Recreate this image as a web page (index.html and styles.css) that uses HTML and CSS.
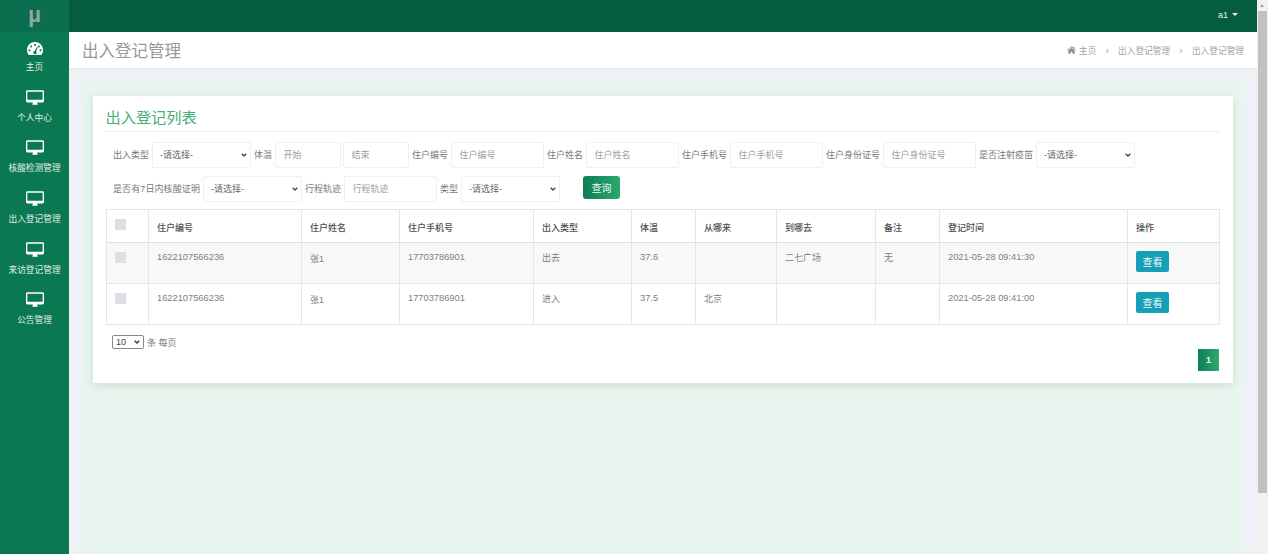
FILE: index.html
```html
<!DOCTYPE html>
<html lang="zh-CN">
<head>
<meta charset="utf-8">
<title>出入登记管理</title>
<link rel="stylesheet" href="styles.css">
</head>
<body>
<div class="app">
  <aside class="sidebar">
    <div class="logo">µ</div>
    <nav>
      <a class="nav-item"><svg class="nav-icon gauge" viewBox="0 0 20 16"><path fill="#fff" fill-rule="evenodd" d="M10 0C4.500 0 0 4.400 0 10c0 2.200.7 4.200 1.900 5.800.2.200.5.200.7.200h14.800c.3 0 .5 0 .7-.2C19.300 14.200 20 12.200 20 10 20 4.400 15.500 0 10 0zM10 2.300a1.300 1.300 0 1 1 0 2.600 1.300 1.300 0 0 1 0-2.600zM5.200 4.300a1.300 1.300 0 1 1 0 2.600 1.300 1.300 0 0 1 0-2.600zM14.800 4.300a1.300 1.300 0 1 1 0 2.600 1.300 1.300 0 0 1 0-2.600zM3 9a1.300 1.300 0 1 1 0 2.600A1.300 1.300 0 0 1 3 9zM17 9a1.300 1.300 0 1 1 0 2.600A1.300 1.300 0 0 1 17 9zM12.500 5.700l.9.4-2 5.700a2 2 0 1 1-1.800-.6z"/></svg><span>主页</span></a>
      <a class="nav-item"><svg class="nav-icon" viewBox="0 0 20 16"><use href="#monitor"/></svg><span>个人中心</span></a>
      <a class="nav-item"><svg class="nav-icon" viewBox="0 0 20 16"><use href="#monitor"/></svg><span>核酸检测管理</span></a>
      <a class="nav-item"><svg class="nav-icon" viewBox="0 0 20 16"><use href="#monitor"/></svg><span>出入登记管理</span></a>
      <a class="nav-item"><svg class="nav-icon" viewBox="0 0 20 16"><use href="#monitor"/></svg><span>来访登记管理</span></a>
      <a class="nav-item"><svg class="nav-icon" viewBox="0 0 20 16"><use href="#monitor"/></svg><span>公告管理</span></a>
    </nav>
  </aside>
  <div class="main">
    <header class="topbar"><span class="user">a1</span><span class="caret"></span></header>
    <div class="titlebar">
      <h1>出入登记管理</h1>
      <ol class="crumbs">
        <li><svg class="home" viewBox="0 0 12 10"><path fill="#8a8a8a" d="M6 0 0 5.200l.6.700L6 1.300l5.400 4.600.6-.7L9.800 3.300V.6H8.300v1.400zM1.800 6v4h3V7.200h2.400V10h3V6L6 2.300z"/></svg>主页</li>
        <li class="sep">›</li>
        <li>出入登记管理</li>
        <li class="sep">›</li>
        <li>出入登记管理</li>
      </ol>
    </div>
    <div class="content">
      <section class="card">
        <h2 class="card-title">出入登记列表</h2>
        <form class="filters">
          <div class="filter-row">
            <label class="lbl">出入类型</label>
            <select class="ctl sel w-select"><option>-请选择-</option></select>
            <label class="lbl">体温</label>
            <input class="ctl w-small" placeholder="开始">
            <input class="ctl w-small" placeholder="结束">
            <label class="lbl">住户编号</label>
            <input class="ctl w-input" placeholder="住户编号">
            <label class="lbl">住户姓名</label>
            <input class="ctl w-input" placeholder="住户姓名">
            <label class="lbl">住户手机号</label>
            <input class="ctl w-input" placeholder="住户手机号">
            <label class="lbl">住户身份证号</label>
            <input class="ctl w-input" placeholder="住户身份证号">
            <label class="lbl">是否注射疫苗</label>
            <select class="ctl sel w-select"><option>-请选择-</option></select>
          </div>
          <div class="filter-row">
            <label class="lbl lbl-long">是否有7日内核酸证明</label>
            <select class="ctl sel w-select"><option>-请选择-</option></select>
            <label class="lbl">行程轨迹</label>
            <input class="ctl w-input" placeholder="行程轨迹">
            <label class="lbl">类型</label>
            <select class="ctl sel w-select"><option>-请选择-</option></select>
            <button type="button" class="btn-query">查询</button>
          </div>
        </form>
        <table class="grid">
          <colgroup>
            <col class="c1"><col class="c2"><col class="c3"><col class="c4"><col class="c5"><col class="c6"><col class="c7"><col class="c8"><col class="c9"><col class="c10"><col class="c11">
          </colgroup>
          <thead>
            <tr><th class="chk"><span class="box"></span></th><th>住户编号</th><th>住户姓名</th><th>住户手机号</th><th>出入类型</th><th>体温</th><th>从哪来</th><th>到哪去</th><th>备注</th><th>登记时间</th><th>操作</th></tr>
          </thead>
          <tbody>
            <tr class="odd"><td class="chk"><span class="box"></span></td><td>1622107566236</td><td class="name">张1</td><td>17703786901</td><td class="cjk">出去</td><td>37.6</td><td class="cjk"></td><td class="cjk">二七广场</td><td class="cjk">无</td><td>2021-05-28 09:41:30</td><td class="act"><button type="button" class="btn-view">查看</button></td></tr>
            <tr><td class="chk"><span class="box"></span></td><td>1622107566236</td><td class="name">张1</td><td>17703786901</td><td class="cjk">进入</td><td>37.5</td><td class="cjk">北京</td><td class="cjk"></td><td class="cjk"></td><td>2021-05-28 09:41:00</td><td class="act"><button type="button" class="btn-view">查看</button></td></tr>
          </tbody>
        </table>
        <div class="length"><select class="len-select"><option>10</option></select><span>条 每页</span></div>
        <div class="pager"><a class="page-on">1</a></div>
      </section>
    </div>
  </div>
  <div class="scrollbar"><span class="arrow"></span><span class="thumb"></span></div>
</div>
<svg class="defs" width="0" height="0"><defs><path id="monitor" fill="#fff" fill-rule="evenodd" d="M1.500 0h17C19.300 0 20 .7 20 1.500v10.500c0 .8-.7 1.500-1.500 1.500H12.300c0 .8.300 1.300.7 1.800V16H7v-.7c.4-.5.700-1 .7-1.800H1.500C.7 13.500 0 12.800 0 12V1.500C0 .7.700 0 1.500 0zM1.500 1.500V10.500h17V1.500z"/></defs></svg>
</body>
</html>
```
FILE: styles.css
```css
* { box-sizing: border-box; }
html, body { margin: 0; height: 554px; overflow: hidden; }
body { font-family: "Liberation Sans", "Noto Sans CJK SC", sans-serif; font-size: 9px; color: #77797b; background: #eef1f5; }
.defs { display: block; }
.app { display: flex; height: 554px; }

.sidebar { width: 69px; flex: none; background: #0a7850; }
.logo { height: 32px; background: #0b6e4f; color: #8fa8a0; font: bold 22px/30px "Liberation Sans", sans-serif; text-align: center; }
.nav-item { display: flex; flex-direction: column; align-items: center; height: 50.700px; padding-top: 7px; color: #e2efea; font-size: 8.700px; line-height: 12px; border-bottom: 1px solid #0d7d55; }
.nav-icon { width: 18px; height: 15px; margin-bottom: 7px; flex: none; }
.nav-icon.gauge { width: 16px; height: 13px; margin: 3px 0 6px; }

.main { flex: 1; min-width: 0; display: flex; flex-direction: column; }
.topbar { height: 32px; flex: none; background: #055d41; display: flex; align-items: center; justify-content: flex-end; padding: 0 19px 3px 0; color: #e8f0ed; }
.user { font-size: 9px; }
.caret { width: 0; height: 0; margin-left: 4px; border-left: 3px solid transparent; border-right: 3px solid transparent; border-top: 3px solid #e8f0ed; }

.titlebar { height: 37px; flex: none; background: #fff; border-bottom: 1px solid #e6e9ec; display: flex; align-items: center; justify-content: space-between; padding: 0 13px; }
.titlebar h1 { margin: 0; font-size: 16.500px; font-weight: 400; color: #999; }
.crumbs { list-style: none; display: flex; align-items: center; gap: 9px; margin: 0; padding: 0; font-size: 8.700px; color: #a2a2a2; }
.crumbs .sep { font-size: 11px; color: #aaa; }
.home { width: 9px; height: 8px; margin-right: 3px; }

.content { flex: 1; margin: 13px 14px 0 13px; background: #e8f5ee; padding: 14px 10px 0 11px; }
.card { height: 287px; background: #fff; padding: 0 13px; box-shadow: 0 2px 8px rgba(0, 40, 20, .12); }
.card-title { margin: 0 0 0 -1px; height: 36px; padding: 12px 0 0 .5px; font-size: 15.200px; line-height: 20px; font-weight: 400; color: #43b074; border-bottom: 1px solid #eceeef; }

.filters { padding: 10px 0 0 6px; }
.filter-row { display: flex; align-items: flex-start; gap: 2px; height: 34px; }
.lbl { line-height: 26px; white-space: nowrap; margin: 0 1px; height: 26px; padding-bottom: 2px; }
.lbl-long { width: 87px; letter-spacing: .1px; }
.ctl { height: 26px; border: 1px solid #eff0f1; background: #fff; border-radius: 2px; font: 9px "Liberation Sans", "Noto Sans CJK SC", sans-serif; color: #666; padding: 0 7.500px; outline: 0; }
.ctl::placeholder { color: #a0a0a0; opacity: 1; }
.sel { appearance: none; padding: 0 7px; background: #fff url("data:image/svg+xml,%3Csvg xmlns='http://www.w3.org/2000/svg' width='6' height='4'%3E%3Cpath d='M.7.7 3 3l2.300-2.300' fill='none' stroke='%23444' stroke-width='1.300'/%3E%3C/svg%3E") no-repeat right 3px center; }
.w-select { width: 99px; }
.w-small { width: 66px; }
.w-input { width: 93px; }
.btn-query { margin-left: 21px; width: 37px; height: 23px; border: 0; border-radius: 3px; background: linear-gradient(90deg, #0e7f55, #2aa86e); color: #f0f9f4; font: 10px "Liberation Sans", "Noto Sans CJK SC", sans-serif; padding: 0; }

.grid { width: 1113px; table-layout: fixed; border-collapse: collapse; margin-top: -1px; font-size: 9.300px; }
.grid th, .grid td { border: 1px solid #e3e5e7; padding: 0 8px; text-align: left; }
.grid th { height: 33px; font-size: 9px; font-weight: 500; color: #4c4f52; padding-top: 3px; border-bottom-color: #dcdfe1; }
.grid td { height: 41px; vertical-align: top; padding-top: 9px; color: #808080; }
.grid td.name { padding-top: 9px; font-size: 9px; }
.grid td.cjk { padding-top: 8px; font-size: 9px; }
.grid .odd td { background: #f8f8f8; }
.grid th.chk { vertical-align: top; padding-top: 9px; }
.box { display: block; width: 11px; height: 11px; background: #dcdfe3; }
.grid td.act { padding-top: 8px; }
.btn-view { display: block; width: 33px; height: 21px; padding: 0; border: 0; border-radius: 2px; background: #189fb8; color: #eef8fa; font: 10px "Liberation Sans", "Noto Sans CJK SC", sans-serif; }
.c1 { width: 42px; } .c2 { width: 153px; } .c3 { width: 98px; } .c4 { width: 134px; } .c5 { width: 98px; } .c6 { width: 64px; } .c7 { width: 81px; } .c8 { width: 99px; } .c9 { width: 64px; } .c10 { width: 188px; } .c11 { width: 92px; }

.length { display: flex; align-items: center; gap: 3px; margin: 10px 0 0 6px; height: 14px; }
.len-select { appearance: none; width: 32px; height: 14px; padding: 0 0 0 3px; font: 9px "Liberation Sans", sans-serif; color: #444; background: #fff url("data:image/svg+xml,%3Csvg xmlns='http://www.w3.org/2000/svg' width='6' height='4'%3E%3Cpath d='M.7.7 3 3l2.300-2.300' fill='none' stroke='%23333' stroke-width='1.300'/%3E%3C/svg%3E") no-repeat right 3px center; border: 1px solid #888; border-radius: 2px; }
.pager { display: flex; justify-content: flex-end; margin: 0 1px 0 0; }
.page-on { display: block; width: 21px; height: 22px; background: linear-gradient(90deg, #0e7f55, #2cab6f); color: #eaf7f0; font-size: 9px; font-weight: 700; line-height: 22px; text-align: center; }

.scrollbar { width: 11px; flex: none; background: #f1f1f1; display: flex; flex-direction: column; align-items: stretch; padding: 0 1px; }
.arrow { height: 11px; flex: none; position: relative; }
.arrow::after { content: ""; position: absolute; left: 2px; top: 4px; border-left: 2.500px solid transparent; border-right: 2.500px solid transparent; border-bottom: 3px solid #a3a3a3; }
.thumb { height: 482px; background: #c1c1c1; }
```
